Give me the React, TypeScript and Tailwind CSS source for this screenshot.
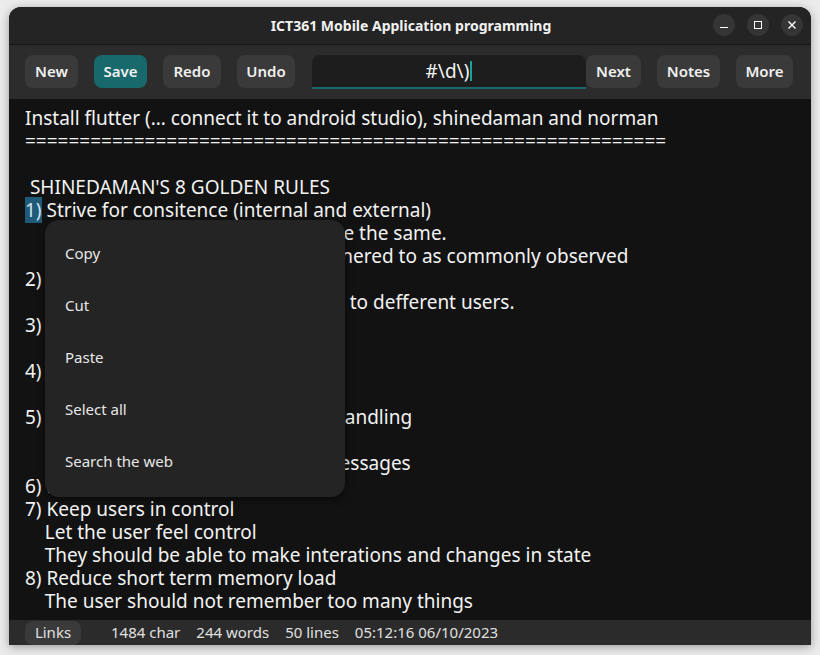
import React from 'react';

const lines: { text: string; sel?: string }[] = [
  { text: 'Install flutter (... connect it to android studio), shinedaman and norman' },
  { text: '===========================================================' },
  { text: '' },
  { text: ' SHINEDAMAN\'S 8 GOLDEN RULES' },
  { text: ' Strive for consitence (internal and external)', sel: '1)' },
  { text: '     Similar elements shall look and be the same.' },
  { text: '    Conventions should always be adhered to as commonly observed' },
  { text: '2) Cater to universal usability' },
  { text: '     Design should be flexibly catered to defferent users.' },
  { text: '3) Offer informative feedback' },
  { text: '' },
  { text: '4) Design dialogs for closure' },
  { text: '' },
  { text: '5) Prevent errors, offer basic error handling' },
  { text: '' },
  { text: '    Give precise constructive error messages' },
  { text: '6) Permit reversal of actions' },
  { text: '7) Keep users in control' },
  { text: '    Let the user feel control' },
  { text: '    They should be able to make interations and changes in state' },
  { text: '8) Reduce short term memory load' },
  { text: '    The user should not remember too many things' },
  { text: '' },
];

const menuItems = ['Copy', 'Cut', 'Paste', 'Select all', 'Search the web'];

const Btn = ({ label, w, teal }: { label: string; w: string; teal?: boolean }) => (
  <div
    className={`${w} h-[33px] shrink-0 rounded-[8px] flex items-center justify-center text-[15px] font-semibold text-[#f0f0f0] ${
      teal ? 'bg-[#17696b]' : 'bg-[#3a3a3a]'
    }`}
  >
    {label}
  </div>
);

export default function App() {
  return (
    <div
      className="w-[820px] h-[655px] bg-[#ebebeb] pt-[7px] px-[9px] pb-[10px] overflow-hidden"
      style={{ fontFamily: '"Noto Sans", "Open Sans", sans-serif' }}
    >
      <div className="w-full h-full flex flex-col rounded-t-[12px] overflow-hidden shadow-[0_2px_10px_rgba(0,0,0,0.35)] bg-[#121212]">
        {/* title bar */}
        <div className="h-[38px] shrink-0 bg-[#242424] border-b border-[#171717] flex items-center relative">
          <div className="flex-1 text-center text-[14px] font-bold text-[#f2f2f2] pl-[2px]">
            ICT361 Mobile Application programming
          </div>
          <div className="absolute right-[8px] top-[7px] flex gap-[12px]">
            <div className="w-[22px] h-[22px] rounded-full bg-[#353535] flex items-center justify-center">
              <div className="w-[8px] h-[1.5px] bg-white mt-[5px]" />
            </div>
            <div className="w-[22px] h-[22px] rounded-full bg-[#353535] flex items-center justify-center">
              <div className="w-[8px] h-[8px] border-[1.5px] border-white" />
            </div>
            <div className="w-[22px] h-[22px] rounded-full bg-[#353535] flex items-center justify-center">
              <svg width="10" height="10" viewBox="0 0 10 10">
                <path d="M1.5 1.5 L8.5 8.5 M8.5 1.5 L1.5 8.5" stroke="white" strokeWidth="1.4" />
              </svg>
            </div>
          </div>
        </div>

        {/* toolbar */}
        <div className="h-[54px] shrink-0 bg-[#2c2c2c] flex items-start pt-[10px] pl-[16px]">
          <Btn label="New" w="w-[53px]" />
          <div className="w-[16px]" />
          <Btn label="Save" w="w-[53px]" teal />
          <div className="w-[16px]" />
          <Btn label="Redo" w="w-[58px]" />
          <div className="w-[16px]" />
          <Btn label="Undo" w="w-[58px]" />
          <div className="w-[17px]" />
          <div className="w-[274px] h-[34px] shrink-0 bg-[#1d1d1d] rounded-t-[8px] border-b-2 border-[#17696b] flex items-center justify-center">
            <span className="text-[19px] text-[#f2f2f2]">#\d\)</span>
            <span className="w-[2px] h-[20px] bg-[#17a0a0] ml-[1px]" />
          </div>
          <Btn label="Next" w="w-[55px]" />
          <div className="w-[16px]" />
          <Btn label="Notes" w="w-[63px]" />
          <div className="w-[16px]" />
          <Btn label="More" w="w-[57px]" />
        </div>

        {/* editor */}
        <div className="flex-1 bg-[#121212] relative overflow-hidden pt-[8px] pl-[16px]">
          {lines.map((l, i) => (
            <div key={i} className="h-[23px] leading-[23px] text-[19px] text-[#f2f2f2] whitespace-pre">
              {l.sel && <span className="bg-[#1f5b78] text-[#cfe3ee]">{l.sel}</span>}
              {l.text}
            </div>
          ))}

          <div className="absolute left-[36px] top-[121px] w-[300px] h-[277px] bg-[#242424] rounded-[14px] shadow-[0_2px_8px_rgba(0,0,0,0.5)] pt-[20px]">
            {menuItems.map((m) => (
              <div key={m} className="h-[52px] pl-[20px] text-[15px] text-[#e8e8e8] leading-[26px]">
                {m}
              </div>
            ))}
          </div>
        </div>

        {/* status bar */}
        <div className="h-[25px] shrink-0 bg-[#2b2b2b] flex items-center pl-[16px] text-[15px] text-[#e0e0e0]">
          <div className="w-[56px] h-[24px] rounded-[8px] bg-[#3a3a3a] flex items-center justify-center text-[15px]">
            Links
          </div>
          <div className="ml-[30px] flex gap-[16px] whitespace-pre">
            <span>1484 char</span>
            <span>244 words</span>
            <span>50 lines</span>
            <span>05:12:16 06/10/2023</span>
          </div>
        </div>
      </div>
    </div>
  );
}
